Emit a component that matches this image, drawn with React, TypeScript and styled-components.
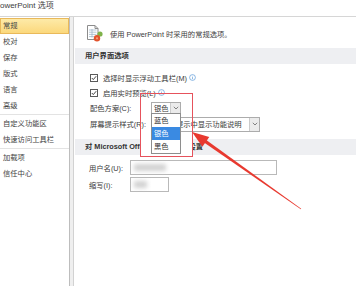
import React from "react";
import styled, { createGlobalStyle } from "styled-components";

const GlobalStyle = createGlobalStyle`
  html, body {
    margin: 0;
    padding: 0;
    background: #fff;
  }
  body {
    width: 356px;
    height: 286px;
    overflow: hidden;
  }
  * {
    box-sizing: border-box;
  }
`;

const FONT = `"Liberation Sans", "Noto Sans CJK SC", sans-serif`;

const Window = styled.div`
  position: relative;
  width: 356px;
  height: 286px;
  display: flex;
  flex-direction: column;
  font-family: ${FONT};
  font-size: 7.3px;
  color: #3a3a3a;
  overflow: hidden;
`;

const TitleBar = styled.div`
  height: 16px;
  flex: none;
  padding-top: 1px;
  font-size: 8px;
  line-height: 10px;
  color: #404040;
  text-indent: -5.4px;
  white-space: nowrap;
`;

const Body = styled.div`
  flex: 1;
  min-height: 0;
  display: flex;
  border-top: 1px solid #d6d6d6;
`;

const Sidebar = styled.nav`
  width: 69px;
  flex: none;
  padding-top: 1px;
`;

const NavItem = styled.div<{ $active?: boolean }>`
  height: 16px;
  line-height: 14px;
  padding-left: 2px;
  white-space: nowrap;
  color: #444;
  border: 1px solid ${(p) => (p.$active ? "#e9b95a" : "transparent")};
  background: ${(p) =>
    p.$active ? "linear-gradient(#fdeaa8, #fbd87c)" : "transparent"};
`;

const NavSep = styled.div`
  height: 1px;
  margin-bottom: 1px;
  background: #e3e3e3;
`;

const Divider = styled.div`
  width: 5px;
  flex: none;
  background: #efefef;
  border-left: 1px solid #bdbdbd;
  border-right: 1px solid #d2d2d2;
`;

const Panel = styled.main`
  flex: 1;
  min-width: 0;
  padding-left: 1px;
`;

const Intro = styled.div`
  height: 31px;
  display: flex;
  align-items: center;
  gap: 6px;
  padding: 2px 0 0 10px;
  color: #3c3c3c;
`;

const SectionHeader = styled.div<{ $mt?: number }>`
  height: 16px;
  margin-top: ${(p) => p.$mt ?? 0}px;
  line-height: 16px;
  padding-left: 10px;
  background: #eeeff2;
  font-weight: bold;
  color: #333;
  white-space: nowrap;
`;

const Group = styled.div<{ $top: number; $left: number }>`
  display: flex;
  flex-direction: column;
  padding: ${(p) => p.$top}px 0 0 ${(p) => p.$left}px;
`;

const CheckRow = styled.div`
  height: 15px;
  display: flex;
  align-items: center;
  gap: 5px;
  white-space: nowrap;
`;

const FieldRow = styled.div<{ $h: number; $mt?: number }>`
  height: ${(p) => p.$h}px;
  margin-top: ${(p) => p.$mt ?? 0}px;
  display: flex;
  align-items: center;
  white-space: nowrap;
`;

const Label = styled.span<{ $w: number }>`
  width: ${(p) => p.$w}px;
  flex: none;
`;

const SelectBox = styled.div<{ $w: number; $h: number }>`
  position: relative;
  width: ${(p) => p.$w}px;
  height: ${(p) => p.$h}px;
  display: flex;
  border: 1px solid #acacac;
  background: #fff;
`;

const SelectText = styled.span`
  flex: 1;
  min-width: 0;
  padding-left: 2px;
  display: flex;
  align-items: center;
  overflow: hidden;
`;

const SelectButton = styled.span`
  width: 10px;
  flex: none;
  display: flex;
  align-items: center;
  justify-content: center;
  background: #ebebeb;
  border-left: 1px solid #cbcbcb;
`;

/* open list of the colour-scheme select; its lower part sits on a white pad */
const Popup = styled.div`
  position: absolute;
  top: 100%;
  left: -1px;
  width: 30px;
  z-index: 2;

  &::before {
    content: "";
    position: absolute;
    left: -11px;
    right: -12px;
    top: 23px;
    bottom: -2px;
    background: #fff;
    z-index: -1;
  }
`;

const List = styled.div`
  border: 1px solid #8e8e8e;
  background: #fff;
`;

const ListItem = styled.div<{ $selected?: boolean }>`
  height: 13px;
  line-height: 13px;
  padding-left: 2px;
  color: ${(p) => (p.$selected ? "#fff" : "#333")};
  background: ${(p) => (p.$selected ? "#3a8ae2" : "transparent")};
`;

const Input = styled.div<{ $w: number }>`
  width: ${(p) => p.$w}px;
  height: 15px;
  display: flex;
  align-items: center;
  padding-left: 3px;
  border: 1px solid #b9b9b9;
`;

const Blurred = styled.span<{ $w: number }>`
  width: ${(p) => p.$w}px;
  height: 7px;
  background: #d2d2d2;
  filter: blur(2px);
`;

const Highlight = styled.div`
  position: absolute;
  left: 140px;
  top: 93px;
  width: 53px;
  height: 64px;
  border: 1px solid #e6525c;
  pointer-events: none;
  z-index: 3;
`;

const Overlay = styled.svg`
  position: absolute;
  left: 0;
  top: 0;
  pointer-events: none;
  z-index: 4;
`;

const Check = () => (
  <svg width="8" height="8" viewBox="0 0 8 8">
    <rect x="0.5" y="0.5" width="7" height="7" fill="#fff" stroke="#5a5a5a" />
    <path d="M1.8 4 L3.3 5.6 L6.2 2.2" fill="none" stroke="#333" strokeWidth="0.9" />
  </svg>
);

const Info = () => (
  <svg width="7" height="7" viewBox="0 0 7 7" style={{ marginLeft: -3 }}>
    <circle cx="3.5" cy="3.5" r="2.9" fill="none" stroke="#5b9bd8" strokeWidth="0.7" />
    <circle cx="3.5" cy="2.1" r="0.45" fill="#5b9bd8" />
    <path d="M3.5 3.1 V5.2" stroke="#5b9bd8" strokeWidth="0.7" />
  </svg>
);

const Chevron = () => (
  <svg width="6" height="4" viewBox="0 0 6 4">
    <path d="M0.8 0.8 L3 3 L5.2 0.8" fill="none" stroke="#666" strokeWidth="0.8" />
  </svg>
);

const OptionsIcon = () => (
  <svg width="19" height="17" viewBox="0 0 19 17">
    <path d="M2.5 0.5 H10 L13 3.5 V14.5 H2.5 Z" fill="#fff" stroke="#8c8c8c" />
    <path d="M10 0.5 V3.5 H13" fill="none" stroke="#8c8c8c" />
    <path
      d="M4 5 H11.5 M4 7.2 H11.5 M4 9.4 H11.5 M4 11.6 H9 M7 4 V12.5"
      stroke="#9ab0c4"
      strokeWidth="0.7"
    />
    <circle cx="15" cy="9" r="2.6" fill="#7fb24a" />
    <circle cx="12" cy="13.3" r="3.2" fill="#e2532c" />
    <circle cx="12" cy="13.3" r="1.1" fill="#f6a07a" />
  </svg>
);

const Arrow = () => {
  const tip = [192, 132];
  const tail = [301, 209];
  const dx = tail[0] - tip[0];
  const dy = tail[1] - tip[1];
  const len = Math.hypot(dx, dy);
  const ux = dx / len;
  const uy = dy / len;
  const px = -uy;
  const py = ux;
  const bx = tip[0] + ux * 17;
  const by = tip[1] + uy * 17;
  const pt = (x: number, y: number) => `${x.toFixed(1)},${y.toFixed(1)}`;
  const head = [
    pt(tip[0], tip[1]),
    pt(bx + px * 6, by + py * 6),
    pt(bx - px * 6, by - py * 6),
  ].join(" ");
  const shaft = [
    pt(bx - ux * 2 + px * 1.6, by - uy * 2 + py * 1.6),
    pt(tail[0] + px * 0.3, tail[1] + py * 0.3),
    pt(tail[0] - px * 0.3, tail[1] - py * 0.3),
    pt(bx - ux * 2 - px * 1.6, by - uy * 2 - py * 1.6),
  ].join(" ");
  return (
    <Overlay width="356" height="286" viewBox="0 0 356 286">
      <polygon points={shaft} fill="#e8392f" />
      <polygon points={head} fill="#e8392f" />
    </Overlay>
  );
};

const navTop = ["常规", "校对", "保存", "版式", "语言", "高级"];
const navMid = ["自定义功能区", "快速访问工具栏"];
const navBottom = ["加载项", "信任中心"];

export default function App() {
  return (
    <>
      <GlobalStyle />
      <Window>
        <TitleBar>PowerPoint 选项</TitleBar>
        <Body>
          <Sidebar>
            {navTop.map((t, i) => (
              <NavItem key={t} $active={i === 0}>
                {t}
              </NavItem>
            ))}
            <NavSep />
            {navMid.map((t) => (
              <NavItem key={t}>{t}</NavItem>
            ))}
            <NavSep />
            {navBottom.map((t) => (
              <NavItem key={t}>{t}</NavItem>
            ))}
          </Sidebar>
          <Divider />
          <Panel>
            <Intro>
              <OptionsIcon />
              <span>使用 PowerPoint 时采用的常规选项。</span>
            </Intro>
            <SectionHeader>用户界面选项</SectionHeader>
            <Group $top={6} $left={15}>
              <CheckRow>
                <Check />
                <span>选择时显示浮动工具栏(M)</span>
                <Info />
              </CheckRow>
              <CheckRow>
                <Check />
                <span>启用实时预览(L)</span>
                <Info />
              </CheckRow>
              <FieldRow $h={15}>
                <Label $w={61}>配色方案(C):</Label>
                <SelectBox $w={30} $h={12}>
                  <SelectText>银色</SelectText>
                  <SelectButton>
                    <Chevron />
                  </SelectButton>
                  <Popup>
                    <List>
                      <ListItem>蓝色</ListItem>
                      <ListItem $selected>银色</ListItem>
                      <ListItem>黑色</ListItem>
                    </List>
                  </Popup>
                </SelectBox>
              </FieldRow>
              <FieldRow $h={16} $mt={1}>
                <Label $w={61}>屏幕提示样式(R):</Label>
                <SelectBox $w={109} $h={15}>
                  <SelectText>在屏幕提示中显示功能说明</SelectText>
                  <SelectButton>
                    <Chevron />
                  </SelectButton>
                </SelectBox>
              </FieldRow>
            </Group>
            <SectionHeader $mt={7}>对 Microsoft Office 进行个性化设置</SectionHeader>
            <Group $top={5} $left={14}>
              <FieldRow $h={15}>
                <Label $w={41}>用户名(U):</Label>
                <Input $w={147}>
                  <Blurred $w={32} />
                </Input>
              </FieldRow>
              <FieldRow $h={15} $mt={2}>
                <Label $w={41}>缩写(I):</Label>
                <Input $w={39}>
                  <Blurred $w={13} />
                </Input>
              </FieldRow>
            </Group>
          </Panel>
        </Body>
        <Highlight />
        <Arrow />
      </Window>
    </>
  );
}
